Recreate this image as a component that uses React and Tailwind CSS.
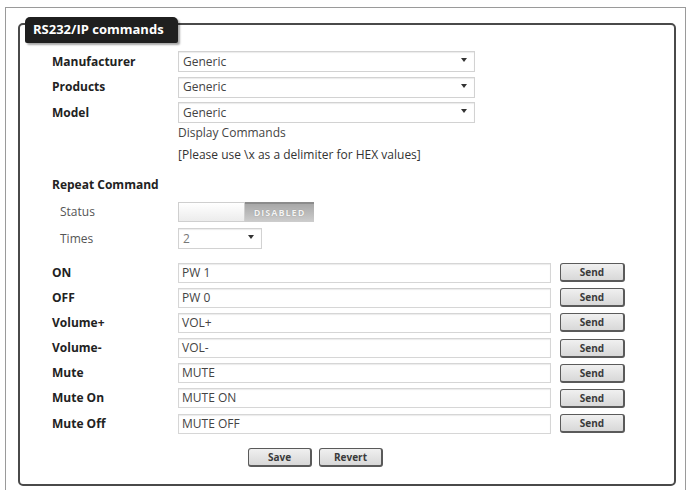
const font = { fontFamily: '"Open Sans", "Noto Sans", sans-serif' };

const commands = [
  { label: "ON", value: "PW 1" },
  { label: "OFF", value: "PW 0" },
  { label: "Volume+", value: "VOL+" },
  { label: "Volume-", value: "VOL-" },
  { label: "Mute", value: "MUTE" },
  { label: "Mute On", value: "MUTE ON" },
  { label: "Mute Off", value: "MUTE OFF" },
];

function Select({ value, className = "" }) {
  return (
    <div className={`relative flex items-center h-[21px] bg-white border border-[#d2d2d2] shadow-[inset_0_1px_1px_rgba(0,0,0,0.08)] pl-[4px] text-[12px] text-[#444] ${className}`}>
      {value}
      <span className="absolute right-[7px] top-[6px] w-0 h-0 border-l-[3px] border-r-[3px] border-t-[4px] border-l-transparent border-r-transparent border-t-[#333]" />
    </div>
  );
}

function Button({ children, className = "" }) {
  return (
    <button className={`h-[19px] rounded-[3px] border border-[#5a5a5a] border-r-2 border-b-2 bg-gradient-to-b from-[#f0f0f0] to-[#d8d8d8] text-[10px] font-bold text-[#3a3a3a] leading-none ${className}`}>
      {children}
    </button>
  );
}

export default function App() {
  return (
    <div className="w-[687px] h-[490px] bg-white overflow-hidden" style={font}>
      <div className="ml-[5px] mt-[7px] w-[681px] h-[490px] border border-b-0 border-[#9a9a9a]">
        <div className="relative ml-[12px] mt-[15px] w-[658px] border-2 border-[#4a4a4a] rounded-[5px] pl-[32px] pt-[26px] pb-[17px]">
          {/* legend tab sitting on the top border */}
          <div className="absolute left-[5px] top-[-8px] w-[153px] h-[26px] bg-[#1f1f1f] rounded-t-[5px] rounded-b-[2px] shadow-[2px_2px_2px_rgba(0,0,0,0.35)] flex items-center pl-[8px] text-[13px] font-bold text-white">
            RS232/IP commands
          </div>

          <div className="flex flex-col">
            {["Manufacturer", "Products", "Model"].map((label, i) => (
              <div key={label} className={`flex items-center h-[21px] ${i ? "mt-[4.5px]" : ""}`}>
                <span className="w-[126px] text-[12px] font-bold text-[#222]">{label}</span>
                <Select value="Generic" className="w-[297px]" />
              </div>
            ))}

            <div className="ml-[126px] mt-[2px] h-[16px] flex items-center text-[12px] text-[#444]">
              Display Commands
            </div>
            <div className="ml-[126px] mt-[6px] h-[16px] flex items-center text-[12px] text-[#333]">
              [Please use \x as a delimiter for HEX values]
            </div>

            <div className="mt-[14px] h-[16px] flex items-center text-[12px] font-bold text-[#222]">
              Repeat Command
            </div>

            <div className="mt-[9px] h-[20px] flex items-center">
              <span className="w-[126px] pl-[8px] text-[12px] text-[#555]">Status</span>
              <div className="flex w-[136px] h-[20px]">
                <div className="w-[67px] h-full border border-[#cfcfcf] bg-gradient-to-b from-white to-[#ececec]" />
                <div className="flex-1 h-full flex items-center justify-center bg-gradient-to-b from-[#a8a8a8] to-[#cdcdcd] border-t-2 border-[#8c8c8c] text-[9px] font-bold tracking-[1px] text-[#f4f4f4] [text-shadow:0_0_1px_#888]">
                  DISABLED
                </div>
              </div>
            </div>

            <div className="mt-[6px] h-[21px] flex items-center">
              <span className="w-[126px] pl-[8px] text-[12px] text-[#555]">Times</span>
              <Select value="2" className="w-[84px] text-[#777]" />
            </div>

            {commands.map((c, i) => (
              <div key={c.label} className={`flex items-center h-[20px] ${i ? "mt-[5.2px]" : "mt-[13.5px]"}`}>
                <span className="w-[126px] text-[12px] font-bold text-[#222]">{c.label}</span>
                <div className="w-[373px] h-[20px] flex items-center pl-[3px] bg-white border border-[#d6d6d6] shadow-[inset_0_1px_1px_rgba(0,0,0,0.08)] text-[12px] text-[#444]">
                  {c.value}
                </div>
                <Button className="ml-[9px] w-[65px]">Send</Button>
              </div>
            ))}

            <div className="mt-[14.3px] flex gap-[7px] pl-[196px]">
              <Button className="w-[64px]">Save</Button>
              <Button className="w-[64px]">Revert</Button>
            </div>
          </div>
        </div>
      </div>
    </div>
  );
}
